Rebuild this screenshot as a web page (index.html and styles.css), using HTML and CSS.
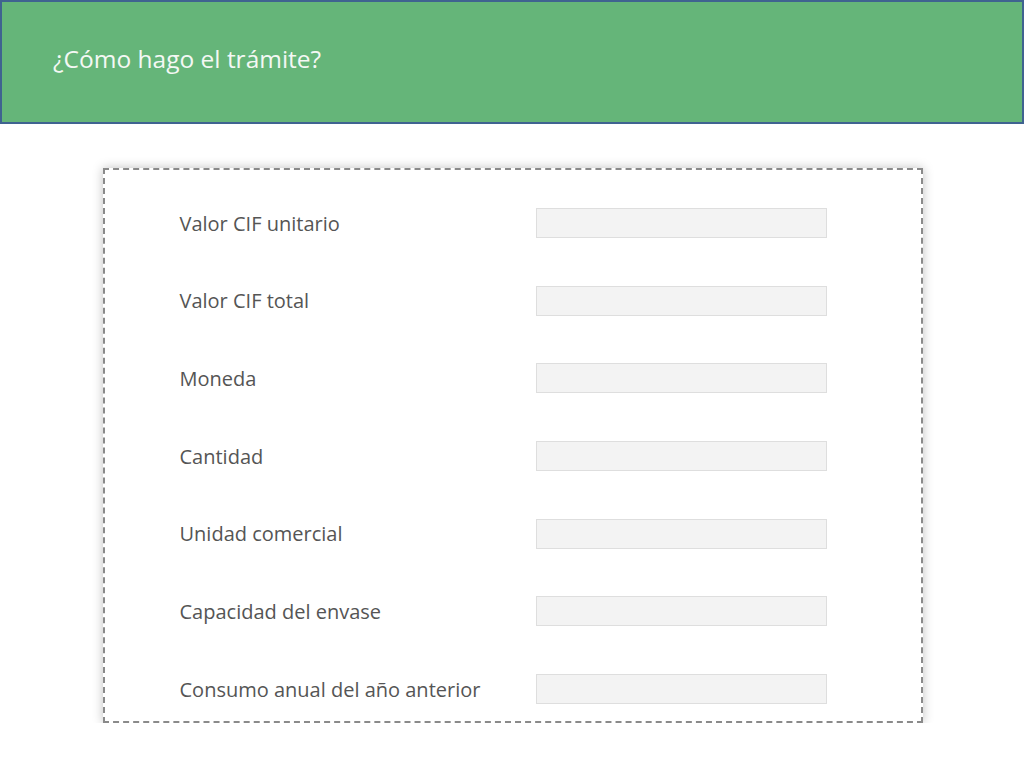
FILE: index.html
```html
<!DOCTYPE html>
<html lang="es">
<head>
    <meta charset="UTF-8">
    <meta name="viewport" content="width=device-width, initial-scale=1.0">
    <title>¿Cómo hago el trámite?</title>
    <link rel="stylesheet" href="styles.css">
</head>
<body>
    <header class="banner">
        <h1 class="banner-title">¿Cómo hago el trámite?</h1>
    </header>

    <main class="stage">
        <form class="card">
            <div class="row">
                <label class="label">Valor CIF unitario</label>
                <div class="field"></div>
            </div>
            <div class="row">
                <label class="label">Valor CIF total</label>
                <div class="field"></div>
            </div>
            <div class="row">
                <label class="label">Moneda</label>
                <div class="field"></div>
            </div>
            <div class="row">
                <label class="label">Cantidad</label>
                <div class="field"></div>
            </div>
            <div class="row">
                <label class="label">Unidad comercial</label>
                <div class="field"></div>
            </div>
            <div class="row">
                <label class="label">Capacidad del envase</label>
                <div class="field"></div>
            </div>
            <div class="row">
                <label class="label">Consumo anual del año anterior</label>
                <div class="field"></div>
            </div>
        </form>
    </main>
</body>
</html>
```

FILE: styles.css
```css
body {
    margin: 0;
    background: #ffffff;
    font-family: "Open Sans", "DejaVu Sans", sans-serif;
}

.banner {
    height: 124px;
    box-sizing: border-box;
    background: #65b579;
    border: 2px solid #3f6390;
    display: flex;
    align-items: center;
    padding-left: 51px;
    padding-bottom: 8px;
}

.banner-title {
    margin: 0;
    font-weight: normal;
    font-size: 24.5px;
    color: #f4f8f4;
}

.stage {
    display: flex;
    justify-content: center;
    padding-top: 44px;
}

.card {
    width: 820px;
    box-sizing: border-box;
    margin-left: 1px;
    border: 2px dashed #8a8a8a;
    background: #ffffff;
    box-shadow: 0 0 10px rgba(0, 0, 0, 0.25);
    padding: 33px 0 12px 75px;
    display: flex;
    flex-direction: column;
    gap: 37.7px;
}

.row {
    height: 40px;
    display: grid;
    grid-template-columns: 356px 291px;
    align-items: center;
}

.label {
    font-size: 20px;
    color: #555555;
}

.field {
    height: 30px;
    box-sizing: border-box;
    background: #f3f3f3;
    border: 1px solid #dedede;
}
```
